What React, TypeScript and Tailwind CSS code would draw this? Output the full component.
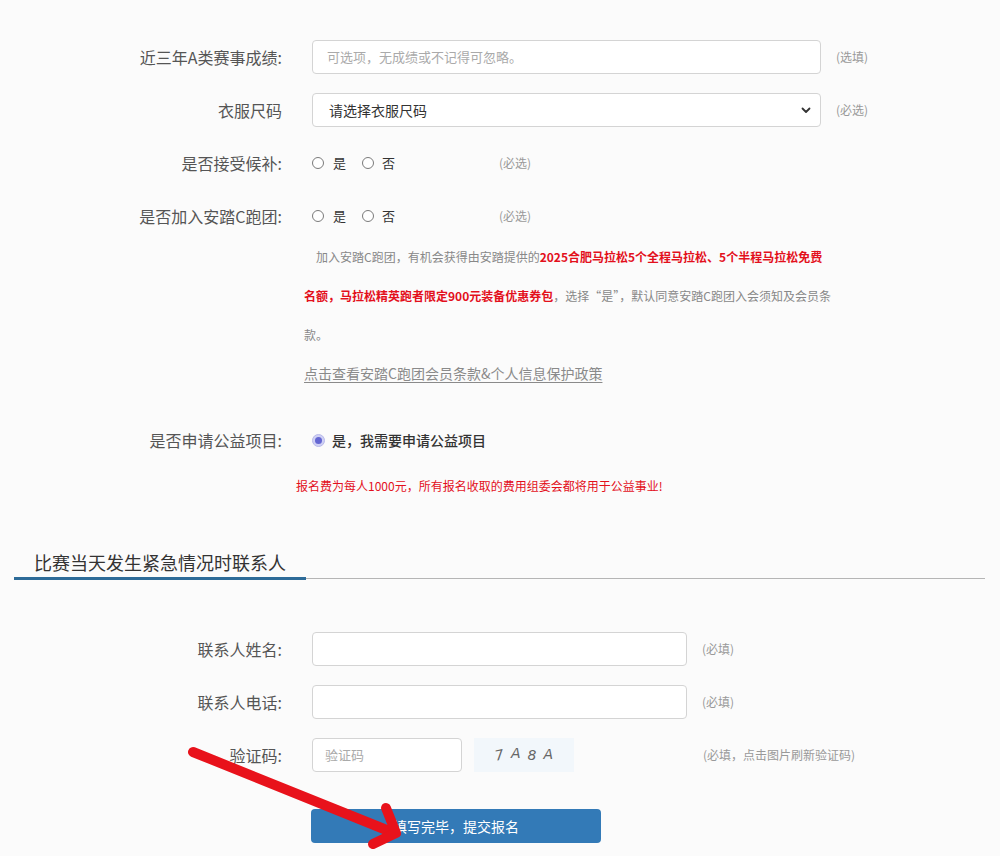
import React from "react";

const FONT = { fontFamily: '"Noto Sans CJK SC", "Liberation Sans", sans-serif' };

function Label({ children }: { children: React.ReactNode }) {
  return (
    <div className="w-[282px] shrink-0 text-right text-[16px] text-[#555] leading-[34px]">{children}</div>
  );
}

function Note({ children, className = "" }: { children: React.ReactNode; className?: string }) {
  return <div className={`text-[12px] text-[#999] ${className}`}>{children}</div>;
}

function Radio({ checked = false }: { checked?: boolean }) {
  if (checked) {
    return (
      <div className="w-[13px] h-[13px] rounded-full bg-[#cfd0f4] border border-[#b8b9ea] flex items-center justify-center">
        <div className="w-[7px] h-[7px] rounded-full bg-[#6466d2]" />
      </div>
    );
  }
  return <div className="w-[12px] h-[12px] rounded-full border border-[#7a7a7a] bg-white" />;
}

function YesNo() {
  return (
    <div className="w-[187px] flex items-center text-[13px] text-[#333]">
      <Radio />
      <span className="ml-[9px]">是</span>
      <div className="ml-[16px]">
        <Radio />
      </div>
      <span className="ml-[8px]">否</span>
    </div>
  );
}

export default function App() {
  return (
    <div className="relative w-full h-[856px] overflow-hidden bg-[#fbfbfb]" style={FONT}>
      <div className="pt-[40px] flex flex-col">
        {/* Row 1 */}
        <div className="flex items-center h-[34px]">
          <Label>近三年A类赛事成绩:</Label>
          <div className="ml-[30px] w-[509px] h-[34px] border border-[#d4d4d4] rounded-[4px] bg-white flex items-center px-[14px] text-[13px] text-[#aaa]">
            可选项，无成绩或不记得可忽略。
          </div>
          <Note className="ml-[15px]">(选填)</Note>
        </div>
        {/* Row 2 */}
        <div className="flex items-center h-[34px] mt-[19px]">
          <Label>衣服尺码</Label>
          <div className="ml-[30px] w-[509px] h-[34px] border border-[#d4d4d4] rounded-[4px] bg-white flex items-center justify-between pl-[16px] pr-[8px] text-[14px] text-[#333]">
            <span>请选择衣服尺码</span>
            <svg width="12" height="12" viewBox="0 0 12 12">
              <path d="M2.5 4.5 L6 8 L9.5 4.5" fill="none" stroke="#333" strokeWidth="1.8" strokeLinecap="round" strokeLinejoin="round" />
            </svg>
          </div>
          <Note className="ml-[15px]">(必选)</Note>
        </div>
        {/* Row 3 */}
        <div className="flex items-center h-[34px] mt-[19px]">
          <Label>是否接受候补:</Label>
          <div className="ml-[30px] flex items-center">
            <YesNo />
            <Note>(必选)</Note>
          </div>
        </div>
        {/* Row 4 */}
        <div className="flex items-center h-[34px] mt-[19px]">
          <Label>是否加入安踏C跑团:</Label>
          <div className="ml-[30px] flex items-center">
            <YesNo />
            <Note>(必选)</Note>
          </div>
        </div>
        {/* Paragraph */}
        <div className="mt-[4px] pl-[304px] text-[12px] leading-[39px] text-[#888]">
          <div className="whitespace-nowrap pl-[12px]">
            加入安踏C跑团，有机会获得由安踏提供的
            <span className="font-bold text-[#e3101c]">2025合肥马拉松5个全程马拉松、5个半程马拉松免费</span>
          </div>
          <div className="whitespace-nowrap">
            <span className="font-bold text-[#e3101c]">名额，马拉松精英跑者限定900元装备优惠券包</span>
            ，选择“是”，默认同意安踏C跑团入会须知及会员条
          </div>
          <div>款。</div>
          <div className="text-[14px] text-[#8a8a8a] underline underline-offset-[3px]">
            点击查看安踏C跑团会员条款&amp;个人信息保护政策
          </div>
        </div>
        {/* Row 5 */}
        <div className="flex items-center h-[34px] mt-[30px]">
          <Label>是否申请公益项目:</Label>
          <div className="ml-[30px] flex items-center">
            <Radio checked />
            <span className="ml-[7px] text-[14px] text-[#333] font-medium">是，我需要申请公益项目</span>
          </div>
        </div>
        <div className="mt-[20px] pl-[296px] text-[12px] leading-[18px] text-[#e3101c]">
          报名费为每人1000元，所有报名收取的费用组委会都将用于公益事业!
        </div>
        {/* Section header */}
        <div className="mt-[55px] pl-[34px] text-[18px] leading-[24px] text-[#333]">比赛当天发生紧急情况时联系人</div>
        <div className="mt-[3px] mx-[14px] w-[971px] h-[3px] flex items-center">
          <div className="w-[292px] h-[3px] bg-[#2d6b98]" />
          <div className="flex-1 h-[1px] bg-[#b5b5b5]" />
        </div>
        {/* Contact rows */}
        <div className="flex items-center h-[34px] mt-[52px]">
          <Label>联系人姓名:</Label>
          <div className="ml-[30px] w-[375px] h-[34px] border border-[#d4d4d4] rounded-[4px] bg-white" />
          <Note className="ml-[15px]">(必填)</Note>
        </div>
        <div className="flex items-center h-[34px] mt-[19px]">
          <Label>联系人电话:</Label>
          <div className="ml-[30px] w-[375px] h-[34px] border border-[#d4d4d4] rounded-[4px] bg-white" />
          <Note className="ml-[15px]">(必填)</Note>
        </div>
        <div className="flex items-center h-[34px] mt-[19px]">
          <Label>验证码:</Label>
          <div className="ml-[30px] w-[150px] h-[34px] border border-[#d4d4d4] rounded-[4px] bg-white flex items-center px-[12px] text-[13px] text-[#aaa]">
            验证码
          </div>
          <div className="ml-[12px] w-[100px] h-[34px] bg-[#f2f7fb] flex items-center justify-center gap-[7px] text-[14px] text-[#666] italic" style={{ fontFamily: '"DejaVu Sans", sans-serif' }}>
            <span className="-rotate-12">7</span>
            <span className="-mt-[3px]">A</span>
            <span>8</span>
            <span className="-mt-[2px]">A</span>
          </div>
          <Note className="ml-[129px]">(必填，点击图片刷新验证码)</Note>
        </div>
        <div className="mt-[37px] ml-[311px] w-[290px] h-[34px] rounded-[4px] bg-[#337ab7] text-white text-[14px] flex items-center justify-center">
          填写完毕，提交报名
        </div>
      </div>
      {/* Red arrow overlay */}
      <svg className="absolute left-0 top-0 pointer-events-none" width="1000" height="856" viewBox="0 0 1000 856">
        <g fill="none" stroke="#e8121b" strokeWidth="10" strokeLinecap="round" strokeLinejoin="round">
          <path d="M193 752 L394 833" />
          <path d="M386 808 L396 833 L373 844" />
        </g>
      </svg>
    </div>
  );
}
